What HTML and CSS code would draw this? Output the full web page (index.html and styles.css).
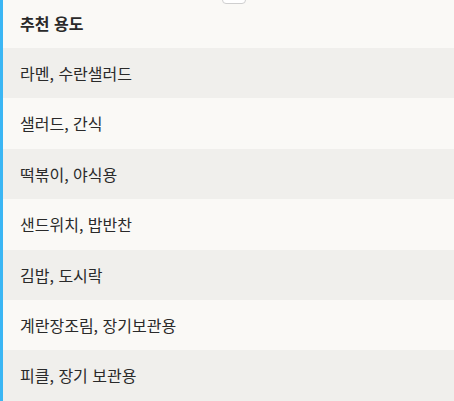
FILE: index.html
```html
<!DOCTYPE html>
<html lang="ko">
<head>
<meta charset="utf-8">
<link rel="stylesheet" href="styles.css">
</head>
<body>
<div class="panel">
  <div class="handle"></div>
  <div class="head">추천 용도</div>
  <div class="row alt">라멘, 수란샐러드</div>
  <div class="row">샐러드, 간식</div>
  <div class="row alt">떡볶이, 야식용</div>
  <div class="row">샌드위치, 밥반찬</div>
  <div class="row alt">김밥, 도시락</div>
  <div class="row">계란장조림, 장기보관용</div>
  <div class="row alt">피클, 장기 보관용</div>
</div>
</body>
</html>
```
FILE: styles.css
```css
html, body {
  margin: 0;
  padding: 0;
  background: #faf9f6;
}
.panel {
  position: relative;
  border-left: 3px solid #3bb6f4;
  font-family: "Noto Sans CJK KR", "Noto Sans", sans-serif;
  font-size: 16px;
  line-height: 22.4px;
  color: #2a2a2a;
  min-height: 401px;
  box-sizing: border-box;
}
.handle {
  position: absolute;
  left: 219px;
  top: -6px;
  width: 22px;
  height: 8px;
  background: #fff;
  border: 1px solid #cfcfcf;
  border-radius: 4px;
}
.head {
  font-weight: 700;
  padding: 12px 17px 13.6px;
}
.row {
  padding: 14px 17px;
  background: #faf9f6;
}
.row.alt {
  background: #f0efec;
}
```
